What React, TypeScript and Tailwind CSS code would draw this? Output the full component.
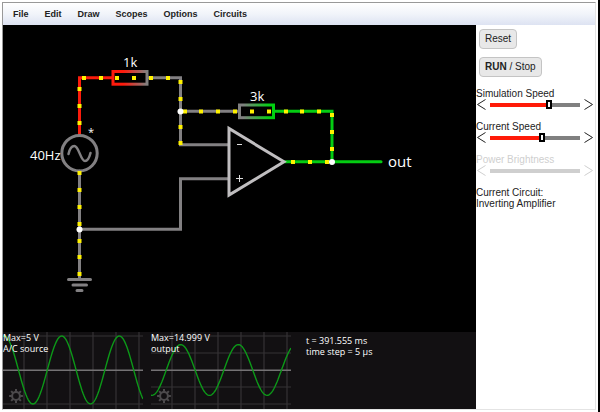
import { useState } from "react";

const MENUS = ["File", "Edit", "Draw", "Scopes", "Options", "Circuits"];

// where the current dots sit on the wires
const CURRENT_DOTS: [number, number][] = [
  [79.5, 89], [79.5, 106], [79.5, 123],
  [84, 78], [101, 78], [117, 78], [134, 78], [151, 78], [168, 78],
  [180.5, 82], [180.5, 99], [180.5, 127], [180.5, 143],
  [185, 111.5], [201, 111.5], [218, 111.5], [235, 111.5], [252, 111.5], [269, 111.5],
  [286, 111.5], [302, 111.5], [319, 111.5],
  [332, 115], [332, 132], [332, 149],
  [293, 162], [310, 162], [327, 162],
  [79.5, 173], [79.5, 190], [79.5, 207], [79.5, 224], [79.5, 241], [79.5, 257], [79.5, 274],
];

const JUNCTIONS: [number, number][] = [
  [180.5, 111.5],
  [332, 162],
  [79.5, 229.5],
];

function MenuBar() {
  return (
    <nav className="flex h-[22px] shrink-0 items-center gap-4 bg-gradient-to-b from-white via-[#f1f4fa] to-[#dde3f2] px-[10px]">
      {MENUS.map((name) => (
        <button key={name} type="button" className="text-[9px] font-bold leading-3 text-[#222]">
          {name}
        </button>
      ))}
    </nav>
  );
}

function Circuit() {
  return (
    <svg
      viewBox="3 25 473 307"
      preserveAspectRatio="xMinYMin meet"
      className="block min-h-0 w-full flex-1"
      role="img"
      aria-label="Inverting amplifier circuit"
    >
      <defs>
        <linearGradient id="inputDrop">
          <stop offset="0.3" stopColor="#ff1a0c" />
          <stop offset="1" stopColor="#808080" />
        </linearGradient>
        <linearGradient id="feedbackDrop">
          <stop offset="0.1" stopColor="#808080" />
          <stop offset="0.9" stopColor="#00d010" />
        </linearGradient>
      </defs>

      <g fill="none" strokeWidth="3" strokeLinecap="round">
        <g stroke="#fa1c0c">
          <path d="M79.5 135V77.7H112" />
        </g>
        <g stroke="#828082">
          <path d="M148 77.7H180.5V144.7H228" />
          <path d="M180.5 111.3H239" />
          <path d="M228 178.8H180.5V229.2H79.5" />
          <path d="M79.5 171V279" />
          <path d="M68.5 279.4H90.5M73 285H86.5M77 290.4H82" />
          <circle cx="79.5" cy="153.2" r="17.7" />
          <path
            strokeWidth="2.5"
            d="M68.5 154C70 147.5 72 146 74.3 146C79 146 80.5 161 85 161C87.5 161 89 159 90.5 153"
          />
        </g>
        <g stroke="#04cc12">
          <path d="M275 111.3H332V161.8" />
          <path d="M285 161.8H381" />
        </g>
        <path d="M229 128.5V195L284 161.8Z" stroke="#c0bec0" strokeLinejoin="miter" />
      </g>

      <rect x="113" y="71.5" width="34" height="12.7" fill="none" stroke="url(#inputDrop)" strokeWidth="3" />
      <rect x="239.5" y="105" width="34" height="12.7" fill="none" stroke="url(#feedbackDrop)" strokeWidth="3" />

      {CURRENT_DOTS.map(([x, y]) => (
        <rect key={`${x}-${y}`} x={x - 2} y={y - 2} width="4" height="4" fill="#fff200" />
      ))}
      {JUNCTIONS.map(([x, y]) => (
        <circle key={`${x}-${y}`} cx={x} cy={y} r="3" fill="#fff" />
      ))}

      <path d="M237 144.5H242M236 178.5H243M239.5 175V182" stroke="#ddd" />

      <g className="fill-white font-['Open_Sans',sans-serif] text-[13px]">
        <text x="123" y="67">1k</text>
        <text x="250" y="101">3k</text>
        <text x="30" y="160">40Hz</text>
        <text x="88" y="136" className="text-[11px]">*</text>
        <text x="388" y="167" className="text-[15px]">out</text>
      </g>
    </svg>
  );
}

interface ScopeProps {
  max: string;
  label: string;
  amplitude: number;
  peak: number;
  gridRows: number[];
}

function sinePath(amplitude: number, peak: number) {
  const points = [];
  for (let x = 0; x <= 140; x++) {
    const y = 38 - amplitude * Math.cos(((x - peak) * 2 * Math.PI) / 57.6);
    points.push(`${x},${y.toFixed(1)}`);
  }
  return points.join(" ");
}

function Scope({ max, label, amplitude, peak, gridRows }: ScopeProps) {
  return (
    <section className="relative w-[140px] shrink-0">
      <svg viewBox="0 0 140 77" className="block w-full" aria-hidden="true">
        <g stroke="#343234" strokeWidth="1.2">
          {[21, 44, 67, 90, 113, 136].map((x) => (
            <path key={x} d={`M${x} 0V77`} />
          ))}
          {gridRows.map((y) => (
            <path key={y} d={`M0 ${y}H140`} />
          ))}
        </g>
        <path d="M0 38.3H140" stroke="#747274" strokeWidth="1.4" />
        <polyline points={sinePath(amplitude, peak)} fill="none" stroke="#0c9818" strokeWidth="1.4" />
      </svg>
      <div className="absolute left-0 top-0 font-['Open_Sans',sans-serif] text-[9px] leading-[11px] text-white">
        <p>{max}</p>
        <p>{label}</p>
      </div>
      <button type="button" aria-label={`${label} settings`} className="absolute bottom-1.5 left-1.5">
        <svg viewBox="-7 -7 14 14" className="block size-[14px]" fill="none" stroke="#4c4a4c">
          <circle r="3.9" strokeWidth="2" />
          {[0, 45, 90, 135, 180, 225, 270, 315].map((a) => (
            <path key={a} d="M0 -4.2V-6.9" strokeWidth="2" transform={`rotate(${a})`} />
          ))}
        </svg>
      </button>
    </section>
  );
}

function Arrow({ flip = false }: { flip?: boolean }) {
  return (
    <svg viewBox="0 0 9 11" className="block h-[11px] w-[9px]" fill="none" stroke="currentColor">
      <path d={flip ? "M0.5 0.5L8.5 5.5L0.5 10.5" : "M8.5 0.5L0.5 5.5L8.5 10.5"} />
    </svg>
  );
}

interface SpeedSliderProps {
  id: string;
  label: string;
  initial: number;
  disabled?: boolean;
}

function SpeedSlider({ id, label, initial, disabled = false }: SpeedSliderProps) {
  const [value, setValue] = useState(initial);
  const track = disabled
    ? "#cfcfcf"
    : `linear-gradient(to right, #ff1a08 ${value}%, #808080 ${value}%)`;

  return (
    <div className={disabled ? "text-[#cfcfcf]" : "text-[#222]"}>
      <label htmlFor={id} className="block leading-[11px]">
        {label}
      </label>
      <div className="flex items-center gap-1 pl-px pr-0.5">
        <button type="button" aria-label={`Lower ${label}`} disabled={disabled} onClick={() => setValue(Math.max(0, value - 1))}>
          <Arrow />
        </button>
        <input
          id={id}
          type="range"
          min="0"
          max="100"
          value={value}
          disabled={disabled}
          onChange={(e) => setValue(Number(e.target.value))}
          style={{ background: track }}
          className={
            disabled
              ? "h-1 min-w-0 flex-1 appearance-none [&::-webkit-slider-thumb]:appearance-none [&::-webkit-slider-thumb]:opacity-0"
              : "h-1 min-w-0 flex-1 appearance-none [&::-webkit-slider-thumb]:h-[9px] [&::-webkit-slider-thumb]:w-[6px] [&::-webkit-slider-thumb]:appearance-none [&::-webkit-slider-thumb]:border-2 [&::-webkit-slider-thumb]:border-black [&::-webkit-slider-thumb]:bg-white"
          }
        />
        <button type="button" aria-label={`Raise ${label}`} disabled={disabled} onClick={() => setValue(Math.min(100, value + 1))}>
          <Arrow flip />
        </button>
      </div>
    </div>
  );
}

function Sidebar() {
  return (
    <aside className="flex w-[119px] shrink-0 flex-col bg-white text-[10px] text-[#222]">
      <div className="flex flex-col items-start gap-2 px-[3px] pt-1">
        <button type="button" className="h-5 rounded-sm border border-[#c4c4c4] bg-[#e8e8e8] px-[5px] leading-4">
          Reset
        </button>
        <button type="button" className="h-5 rounded-sm border border-[#c4c4c4] bg-[#e8e8e8] px-[5px] leading-4">
          <strong>RUN</strong> / Stop
        </button>
      </div>
      <div className="mt-[11px] flex flex-col gap-[11px]">
        <SpeedSlider id="sim-speed" label="Simulation Speed" initial={67} />
        <SpeedSlider id="current-speed" label="Current Speed" initial={58} />
        <SpeedSlider id="power-brightness" label="Power Brightness" initial={50} disabled />
      </div>
      <div className="mt-[11px] leading-[11px]">
        <p>Current Circuit:</p>
        <p>Inverting Amplifier</p>
      </div>
    </aside>
  );
}

export default function App() {
  return (
    <div className="flex h-screen flex-col border-r-2 border-black bg-white p-0.5 font-['Liberation_Sans',sans-serif]">
      <div className="flex min-h-0 flex-1 flex-col border border-b-[#e4e4e4] border-l-[#999] border-r-[#e4e4e4] border-t-[#999]">
        <MenuBar />
        <div className="flex min-h-0 flex-1">
          <main className="flex min-w-0 flex-1 flex-col bg-black">
            <Circuit />
            <div className="flex shrink-0 gap-2 bg-[#121012]">
              <Scope max="Max=5 V" label="A/C source" amplitude={34} peak={58.7} gridRows={[4, 72]} />
              <Scope max="Max=14.999 V" label="output" amplitude={25.4} peak={29.7} gridRows={[4, 21, 55, 72]} />
              <div className="pl-[7px] pt-[3px] font-['Open_Sans',sans-serif] text-[9px] leading-[11px] text-white">
                <p>t = 391.555 ms</p>
                <p>time step = 5 µs</p>
              </div>
            </div>
          </main>
          <Sidebar />
        </div>
      </div>
    </div>
  );
}
